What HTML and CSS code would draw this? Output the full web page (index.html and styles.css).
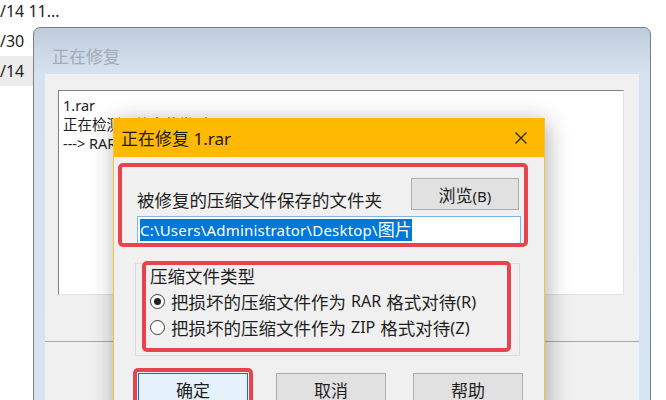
FILE: index.html
```html
<!DOCTYPE html>
<html lang="zh-CN">
<head>
    <meta charset="UTF-8">
    <title>正在修复</title>
    <link rel="stylesheet" href="styles.css">
</head>
<body>
    <!-- File list behind the dialogs -->
    <div class="file-list">
        <div class="file-row">/14 11...</div>
        <div class="file-row">/30</div>
        <div class="file-row selected">/14</div>
    </div>

    <!-- Outer repair window -->
    <div class="win outer-win">
        <div class="outer-title">正在修复</div>
        <div class="outer-client">
            <div class="log-box">
                <div>1.rar</div>
                <div>正在检测压缩文件类型</div>
                <div>---&gt; RAR</div>
            </div>
            <div class="separator"></div>
        </div>
    </div>

    <!-- Repair options dialog -->
    <div class="win dialog">
        <div class="dialog-title">
            <span>正在修复 1.rar</span>
            <svg class="close-icon" width="14" height="14" viewBox="0 0 14 14">
                <path d="M1.5 1.5 L12.5 12.5 M12.5 1.5 L1.5 12.5" stroke="#2b2b2b" stroke-width="1.4" fill="none"/>
            </svg>
        </div>
        <div class="dialog-client">
            <div class="mark folder-box">
                <div class="folder-row">
                    <span class="folder-label">被修复的压缩文件保存的文件夹</span>
                    <button class="btn browse-btn">浏览<span class="key">(B)</span></button>
                </div>
                <div class="path-input"><span class="selection">C:\Users\Administrator\Desktop\<span class="cjk">图片</span></span></div>
            </div>

            <div class="group-box">
                <div class="mark type-box">
                    <div class="group-title">压缩文件类型</div>
                    <label class="radio-row"><span class="radio checked"></span>把损坏的压缩文件作为<span class="latin">RAR</span>格式对待<span class="key">(R)</span></label>
                    <label class="radio-row"><span class="radio"></span>把损坏的压缩文件作为<span class="latin">ZIP</span>格式对待<span class="key">(Z)</span></label>
                </div>
            </div>

            <div class="button-row">
                <div class="mark ok-mark"><button class="btn ok-btn">确定</button></div>
                <button class="btn">取消</button>
                <button class="btn">帮助</button>
            </div>
        </div>
    </div>
</body>
</html>
```

FILE: styles.css
```css
body {
    margin: 0;
    background: #ffffff;
    font-family: "Noto Sans", "Noto Sans CJK SC", sans-serif;
    color: #1e1e1e;
    overflow: hidden;
    height: 400px;
}

/* File list */
.file-list {
    margin-top: -4px;
    width: 40px;
}

.file-row {
    height: 30px;
    line-height: 30px;
    font-size: 16px;
    color: #222;
    white-space: nowrap;
}

.file-row.selected {
    background: #ececec;
}

/* Windows on the desktop */
.win {
    position: absolute;
    box-sizing: border-box;
}

.outer-win {
    left: 33px;
    top: 27px;
    width: 618px;
    height: 400px;
    border: 1px solid #7c7f84;
    border-radius: 7px 7px 0 0;
    background: linear-gradient(to bottom, #bfccdb 0px, #d6e2ef 45px, #d7e4f2 100%);
}

.outer-title {
    height: 46px;
    padding-left: 18px;
    line-height: 58px;
    font-size: 17px;
    color: #a3acb6;
}

.outer-client {
    margin: 0 11px;
    height: 400px;
    background: #f0f0f0;
    padding-top: 16px;
    box-sizing: border-box;
}

.log-box {
    margin: 0 15px 0 13px;
    height: 205px;
    background: #fff;
    border: 1px solid #e2e2e2;
    border-top-color: #7f7f7f;
    border-left-color: #7f7f7f;
    padding: 5px 4px;
    box-sizing: border-box;
    font-size: 14.5px;
    line-height: 19px;
    color: #222;
}

.separator {
    margin-top: 46px;
    height: 1px;
    background: #a8a8a8;
}

/* Dialog */
.dialog {
    left: 113px;
    top: 118px;
    width: 432px;
    height: 300px;
    border: 1px solid #f2c340;
    border-top: none;
    background: #f0f0f0;
    box-shadow: 2px 4px 22px rgba(0, 0, 0, 0.32);
}

.dialog-title {
    height: 39px;
    background: #ffb900;
    display: flex;
    align-items: center;
    justify-content: space-between;
    padding: 0 16px 0 7px;
    font-size: 17px;
    color: #1a1a1a;
}

.close-icon {
    display: block;
}

.dialog-client {
    padding-top: 6px;
}

/* Red annotation frames */
.mark {
    border: 4px solid #e8444e;
    border-radius: 5px;
}

.folder-box {
    margin-left: 4px;
    width: 410px;
    height: 84px;
    box-sizing: border-box;
    padding: 11px 3px 0 15px;
    overflow: hidden;
}

.folder-row {
    display: flex;
    align-items: flex-end;
    justify-content: space-between;
    padding-right: 2px;
}

.folder-label {
    font-size: 17.5px;
    line-height: 20px;
}

.btn {
    width: 110px;
    height: 32px;
    background: #e1e1e1;
    border: 1px solid #adadad;
    font-family: inherit;
    font-size: 17px;
    color: #1e1e1e;
    padding: 0;
}

.browse-btn {
    width: 108px;
}

.key {
    font-size: 15px;
}

.path-input {
    margin-top: 6px;
    height: 28px;
    border: 1px solid #7eb4ea;
    background: #fff;
    box-sizing: border-box;
    padding: 2px 2px;
}

.selection {
    display: inline-block;
    background: #0078d7;
    color: #fff;
    font-size: 15px;
    line-height: 21px;
    letter-spacing: 0.2px;
}

.selection .cjk {
    font-size: 17px;
    letter-spacing: 0;
}

/* Group box */
.group-box {
    margin: 16px 0 0 21px;
    width: 385px;
    height: 93px;
    border: 1px solid #dcdcdc;
    box-sizing: border-box;
}

.type-box {
    margin: -3px 8px 0 6px;
    height: 91px;
    box-sizing: border-box;
    padding: 0 0 0 4px;
}

.group-title {
    font-size: 17.5px;
    line-height: 22px;
}

.radio-row {
    display: flex;
    align-items: center;
    height: 26px;
    font-size: 17.5px;
    white-space: nowrap;
}

.radio-row:first-of-type {
    margin-top: 1px;
}

.radio-row .key {
    font-size: 16.5px;
}

.latin {
    font-size: 16px;
    margin: 0 5px;
}

.radio {
    width: 15px;
    height: 15px;
    border: 1px solid #3a3a3a;
    border-radius: 50%;
    background: #fff;
    margin-right: 6px;
    box-sizing: border-box;
    position: relative;
    flex: none;
}

.radio.checked::after {
    content: "";
    position: absolute;
    left: 3px;
    top: 3px;
    width: 7px;
    height: 7px;
    border-radius: 50%;
    background: #222;
}

/* Button row */
.button-row {
    margin: 12px 0 0 19px;
    display: flex;
    align-items: flex-start;
    gap: 27px;
}

.ok-mark {
    padding: 1px;
    margin-right: -4px;
}

.ok-btn {
    background: #e5f1fb;
    border-color: #0078d7;
    display: block;
}

.button-row > .btn {
    margin-top: 5px;
}
```
